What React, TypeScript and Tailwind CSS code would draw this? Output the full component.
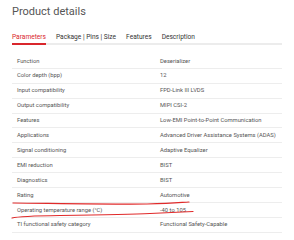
const rows = [
  ['Function', 'Deserializer'],
  ['Color depth (bpp)', '12'],
  ['Input compatibility', 'FPD-Link III LVDS'],
  ['Output compatibility', 'MIPI CSI-2'],
  ['Features', 'Low-EMI Point-to-Point Communication'],
  ['Applications', 'Advanced Driver Assistance Systems (ADAS)'],
  ['Signal conditioning', 'Adaptive Equalizer'],
  ['EMI reduction', 'BIST'],
  ['Diagnostics', 'BIST'],
  ['Rating', 'Automotive'],
  ['Operating temperature range (°C)', '-40 to 105'],
  ['TI functional safety category', 'Functional Safety-Capable'],
]

const tabs = ['Parameters', 'Package | Pins | Size', 'Features', 'Description']

export default function App() {
  return (
    <div
      className="relative w-[294px] h-[240px] overflow-hidden bg-white"
      style={{ fontFamily: 'Roboto, "Liberation Sans", sans-serif' }}
    >
      <div className="pl-[12px] pr-[12px]">
        {/* Heading */}
        <h2 className="pt-[4px] text-[11px] leading-[16px] font-normal text-[#555]">
          Product details
        </h2>

        {/* Tabs */}
        <div className="mt-[11px] flex gap-[10px] border-b-2 border-[#ececec]">
          {tabs.map((t, i) => (
            <div
              key={t}
              className={
                i === 0
                  ? 'h-[14px] -mb-[2px] border-b-2 border-[#d9262c] text-[6.6px] leading-[12px] text-[#d9262c]'
                  : 'h-[14px] -mb-[2px] text-[6.6px] leading-[12px] text-[#333]'
              }
            >
              {t}
            </div>
          ))}
        </div>

        {/* Parameter table */}
        <div className="mt-[9px]">
          {rows.map(([k, v]) => (
            <div
              key={k}
              className="flex h-[14.9px] items-center border-b border-[#ededed] text-[5.8px] text-[#555]"
            >
              <div className="w-[148px] pl-[5px]">{k}</div>
              <div>{v}</div>
            </div>
          ))}
        </div>
      </div>

      {/* hand-drawn red marks */}
      <svg className="absolute left-0 top-0 pointer-events-none" width="294" height="240">
        <path
          d="M13 203 C 60 203.5, 120 204.5, 147 204 S 180 202.5, 189 202"
          stroke="#e02a2a"
          strokeWidth="1.2"
          fill="none"
          strokeLinecap="round"
        />
        <path
          d="M12 218 C 18 216.5, 25 216, 60 215.5 S 130 214.5, 150 213.5 S 182 212, 193 211.5"
          stroke="#e02a2a"
          strokeWidth="1.2"
          fill="none"
          strokeLinecap="round"
        />
      </svg>
    </div>
  )
}
